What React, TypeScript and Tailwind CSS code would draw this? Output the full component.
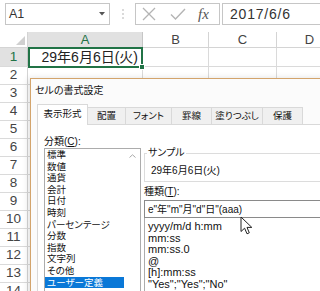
import React from "react"

const sans = "font-['Liberation_Sans','Noto_Sans_CJK_JP',sans-serif]"

const rowNumbers = [2, 3, 4, 5, 6, 7, 8, 9, 10, 11, 12, 13, 14]

const categories = [
    "標準", "数値", "通貨", "会計", "日付", "時刻", "パーセンテージ",
    "分数", "指数", "文字列", "その他", "ユーザー定義",
]

const formats = [
    "yyyy/m/d h:mm", "mm:ss", "mm:ss.0", "@", "[h]:mm:ss", "\"Yes\";\"Yes\";\"No\"",
]

const tabs = [
    { label: "配置", w: "w-[38px]" },
    { label: "フォント", w: "w-[46px]" },
    { label: "罫線", w: "w-[40px]" },
    { label: "塗りつぶし", w: "w-[51px]" },
    { label: "保護", w: "w-[40px]" },
]

function FormulaBar() {
    return (
        <div className="flex items-start h-[32px] pt-[3px] pl-[5px]">
            <div className="flex items-center justify-between w-[105px] h-[22px] border border-[#c6c6c6] pl-[3px] pr-[4px] shrink-0">
                <span className="text-[12.5px] text-[#333]">A1</span>
                <svg width="6" height="4" viewBox="0 0 6 4"><path d="M0 0h6L3 3.5z" fill="#555" /></svg>
            </div>
            <div className="w-[25px] h-[22px] flex items-center justify-center shrink-0">
                <svg width="2" height="10" viewBox="0 0 2 10">
                    <circle cx="1" cy="1" r="0.8" fill="#aaa" />
                    <circle cx="1" cy="5" r="0.8" fill="#aaa" />
                    <circle cx="1" cy="9" r="0.8" fill="#aaa" />
                </svg>
            </div>
            <div className="flex items-center w-[85px] h-[22px] border border-[#c6c6c6] shrink-0">
                <svg className="ml-[6px]" width="14" height="14" viewBox="0 0 14 14">
                    <path d="M1 1L13 13M13 1L1 13" stroke="#b4b4b4" strokeWidth="1.3" />
                </svg>
                <svg className="ml-[14px]" width="16" height="12" viewBox="0 0 16 12">
                    <path d="M1 6.5L5.5 11L15 1" stroke="#b4b4b4" strokeWidth="1.4" fill="none" />
                </svg>
                <span className="ml-[12px] font-['Liberation_Serif',serif] italic text-[15px] text-[#555] leading-none">fx</span>
            </div>
            <div className="ml-[2px] w-[110px] h-[22px] border border-[#c6c6c6] flex items-center pl-[7px] shrink-0">
                <span className="text-[14px] tracking-[0.8px] text-[#333]">2017/6/6</span>
            </div>
        </div>
    )
}

function Sheet() {
    return (
        <div className="text-[#444]">
            <div className="flex h-[16px] border-b border-[#d4d4d4]">
                <div className="relative w-[28px] border-r border-[#d4d4d4] shrink-0">
                    <svg className="absolute right-[2px] bottom-[2px]" width="9" height="9" viewBox="0 0 9 9"><path d="M9 0V9H0z" fill="#d0d0d0" /></svg>
                </div>
                <div className="w-[115px] bg-[#e1e1e1] border-r border-[#c6c6c6] text-[#217346] text-[13px] flex items-center justify-center shrink-0">A</div>
                <div className="w-[66px] border-r border-[#d4d4d4] text-[13px] flex items-center justify-center shrink-0">B</div>
                <div className="w-[68px] border-r border-[#d4d4d4] text-[13px] flex items-center justify-center shrink-0">C</div>
                <div className="w-[66px] border-r border-[#d4d4d4] text-[13px] flex items-center justify-center shrink-0">D</div>
            </div>
            <div className="flex h-[19px] border-b border-[#dadada]">
                <div className="w-[28px] bg-[#e1e1e1] border-r border-[#c6c6c6] text-[#217346] text-[13.5px] flex items-center justify-center shrink-0">1</div>
                <div className="relative w-[115px] -my-[1px] h-[21px] border-2 border-[#217346] flex items-center justify-end pr-[3px] shrink-0">
                    <span className="text-[14px] text-[#222]">29年6月6日(火)</span>
                    <div className="absolute -right-[4px] -bottom-[4px] w-[6px] h-[6px] bg-[#217346] border border-white" />
                </div>
                <div className="w-[66px] border-r border-[#dadada] shrink-0" />
                <div className="w-[68px] border-r border-[#dadada] shrink-0" />
                <div className="w-[66px] border-r border-[#dadada] shrink-0" />
            </div>
            {rowNumbers.map((n) => (
                <div key={n} className="flex h-[18px] border-b border-[#dadada]">
                    <div className="w-[28px] border-r border-[#d4d4d4] text-[13.5px] flex items-center justify-center shrink-0">{n}</div>
                    <div className="w-[115px] border-r border-[#dadada] shrink-0" />
                    <div className="w-[66px] border-r border-[#dadada] shrink-0" />
                    <div className="w-[68px] border-r border-[#dadada] shrink-0" />
                    <div className="w-[66px] border-r border-[#dadada] shrink-0" />
                </div>
            ))}
        </div>
    )
}

function FormatDialog() {
    return (
        <div className="absolute left-[30px] top-[78px] w-[310px] h-[230px] bg-[#fbfbfb] border-l border-t border-[#d3a46c] shadow-[-2px_0_6px_rgba(0,0,0,0.12)] text-[#111] [font-feature-settings:'palt']">
            <div className="h-[22px] flex items-center pl-[4px] text-[10px]">セルの書式設定</div>
            <div className="pl-[6px] pt-[3px]">
                <div className="relative z-10 flex items-end h-[21px]">
                    <div className="w-[51px] h-[21px] bg-white border-l border-t border-r border-[#d9d9d9] flex items-center justify-center text-[9.5px] pb-[2px]">表示形式</div>
                    {tabs.map((t) => (
                        <div key={t.label} className={`${t.w} h-[18px] bg-[#f0f0f0] border-t border-r border-b border-[#d9d9d9] flex items-center justify-center text-[9.5px]`}>
                            {t.label}
                        </div>
                    ))}
                </div>
                <div className="-mt-[1px] h-[200px] bg-white border border-[#d9d9d9] pl-[6px] pt-[11px] flex gap-[3px]">
                    <div className="w-[97px] shrink-0">
                        <div className="h-[12px] leading-[12px] text-[10px]">分類(<span className="underline">C</span>):</div>
                        <div className="flex h-[160px] border border-[#acacac]">
                            <div className="flex-1 text-[9.5px] leading-[11.6px]">
                                {categories.map((c, i) => (
                                    <div key={c} className={i === categories.length - 1 ? "bg-[#0a78d7] text-white pl-[2px] mr-[1px]" : "pl-[2px]"}>
                                        {c}
                                    </div>
                                ))}
                            </div>
                            <div className="w-[15px] flex justify-center pt-[5px]">
                                <svg width="7" height="4" viewBox="0 0 7 4"><path d="M0.5 3.5L3.5 0.8L6.5 3.5" stroke="#a8a8a8" fill="none" /></svg>
                            </div>
                        </div>
                    </div>
                    <div className="flex-1">
                        <fieldset className="mt-[11px] border border-[#dcdcdc] pb-[4px]">
                            <legend className="ml-[2px] px-[1px] leading-[12px] text-[10px]">サンプル</legend>
                            <div className={`pl-[6px] pt-[6px] leading-[12px] text-[10px] ${sans}`}>29年6月6日(火)</div>
                        </fieldset>
                        <div className="mt-[4px] h-[12px] leading-[12px] text-[10px]">種類(<span className="underline">T</span>):</div>
                        <div className={`mt-[2px] h-[18px] border border-[#8a8a8a] flex items-center pl-[3px] text-[10px] ${sans}`}>
                            e"年"m"月"d"日"(aaa)
                        </div>
                        <div className={`border-l border-[#acacac] h-[90px] pt-[3px] pl-[3px] text-[11px] leading-[11.6px] ${sans}`}>
                            {formats.map((f) => (
                                <div key={f}>{f}</div>
                            ))}
                        </div>
                    </div>
                </div>
            </div>
        </div>
    )
}

export default function App() {
    return (
        <div className={`relative w-[320px] h-[291px] overflow-hidden bg-white ${sans}`}>
            <FormulaBar />
            <Sheet />
            <FormatDialog />
            <svg className="absolute left-[240px] top-[216px]" width="13" height="19" viewBox="0 0 13 19">
                <path d="M1 1V15.5L4.6 12.2L7 17.8L9.3 16.8L7 11.4H11.8Z" fill="white" stroke="#222" strokeWidth="1" strokeLinejoin="round" />
            </svg>
        </div>
    )
}
